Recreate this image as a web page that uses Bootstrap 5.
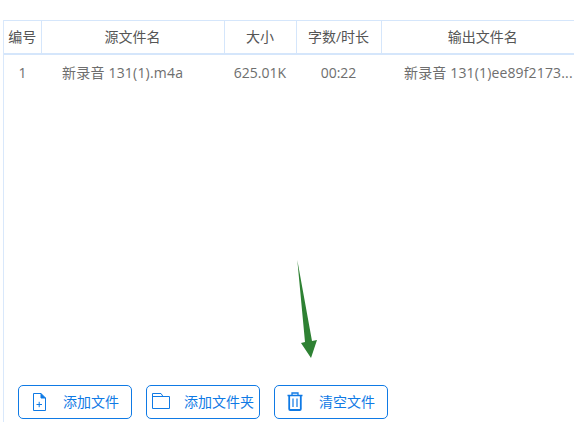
<!DOCTYPE html>
<html lang="zh-CN">
<head>
<meta charset="utf-8">
<title>文件列表</title>
<link href="https://cdn.jsdelivr.net/npm/bootstrap@5.3.0/dist/css/bootstrap.min.css" rel="stylesheet">
<style>
html,body{height:100%;margin:0;overflow:hidden;background:#fff}
body{font-family:"Open Sans","Noto Sans CJK SC",sans-serif;font-size:14px;color:#666}
.shell{width:574px;height:422px;padding-top:20px;position:relative;overflow:hidden}
.panel{height:402px;margin-left:3px;border-left:1px solid #d9e8fb}
.ftable{table-layout:fixed;width:580px;margin:0;border-collapse:collapse;font-size:14px}
.ftable th,.ftable td{padding:0;text-align:center;vertical-align:middle;font-weight:400;white-space:nowrap;overflow:hidden;box-shadow:none;background:transparent}
.ftable thead th{height:33px;color:#555;border-top:1px solid #d5e6fb;border-bottom:2px solid #d5e6fb;border-right:1px solid #d5e6fb}
.ftable thead th:last-child{border-right:0}
.ftable tbody td{height:36px;color:#6e6e6e;border:0}
.ftable tbody td.namecell{text-align:left;padding-left:21px;letter-spacing:.2px}
.ftable tbody td.outcell{text-align:left;padding-left:23px;letter-spacing:.15px}
.c1{width:37px}.c2{width:183px}.c3{width:72px}.c4{width:85px}
.bar{position:absolute;left:18px;top:385px;gap:14px}
.fbtn{width:114px;height:34px;border:1px solid #0f7ae5;border-radius:5px;color:#0f7ae5;background:#fff;font-size:14px;padding:0;line-height:1;--bs-btn-hover-color:#0f7ae5}
.b1 svg{margin-left:14px;margin-right:17px}
.b2 svg{margin-left:5px;margin-right:14px;margin-bottom:2px}
.b3 svg{margin-left:12px;margin-right:16px;margin-bottom:1px}
.arrow{position:absolute;left:290px;top:255px}
</style>
</head>
<body>
<div class="shell">
  <div class="panel">
    <table class="table ftable">
      <thead>
        <tr><th class="c1">编号</th><th class="c2">源文件名</th><th class="c3">大小</th><th class="c4">字数/时长</th><th>输出文件名</th></tr>
      </thead>
      <tbody>
        <tr><td>1</td><td class="namecell">新录音 131(1).m4a</td><td>625.01K</td><td>00:22</td><td class="outcell">新录音 131(1)ee89f2173...</td></tr>
      </tbody>
    </table>
  </div>
  <div class="bar d-flex">
    <button type="button" class="btn fbtn b1 d-flex align-items-center">
      <svg width="13" height="18" viewBox="0 0 13 18" fill="none" stroke="#0f7ae5"><path d="M.5.5H8L12.5 5V17.5H.5Z"/><path d="M8 .5V5H12.5" fill="#0f7ae5"/><path d="M3.5 11.5H9M6.2 8.8V14.2"/></svg>
      <span>添加文件</span>
    </button>
    <button type="button" class="btn fbtn b2 d-flex align-items-center">
      <svg width="18" height="16" viewBox="0 0 18 16" fill="none" stroke="#0f7ae5"><path d="M.5 15.5V.5H9L11 3.5H17.5V15.5Z"/><path d="M.5 3.5H11"/></svg>
      <span>添加文件夹</span>
    </button>
    <button type="button" class="btn fbtn b3 d-flex align-items-center">
      <svg width="16" height="19" viewBox="0 0 16 19" fill="none" stroke="#0f7ae5"><path d="M.5 3.5H15.5M5 3.5V1H11V3.5" stroke-width="1.3"/><path d="M2.2 3.5V17Q2.2 18 3.2 18H12.8Q13.8 18 13.8 17V3.5" stroke-width="1.8"/><path d="M6 6.5V15M10 6.5V15" stroke-width="1.2"/></svg>
      <span>清空文件</span>
    </button>
  </div>
  <svg class="arrow" width="32" height="106" viewBox="290 255 32 106" aria-hidden="true">
    <path d="M297.3 260 305 342 301 343 311 358 317 340 312 341Z" fill="#2e8133"/>
  </svg>
</div>
<script src="https://cdn.jsdelivr.net/npm/bootstrap@5.3.0/dist/js/bootstrap.bundle.min.js"></script>
</body>
</html>
